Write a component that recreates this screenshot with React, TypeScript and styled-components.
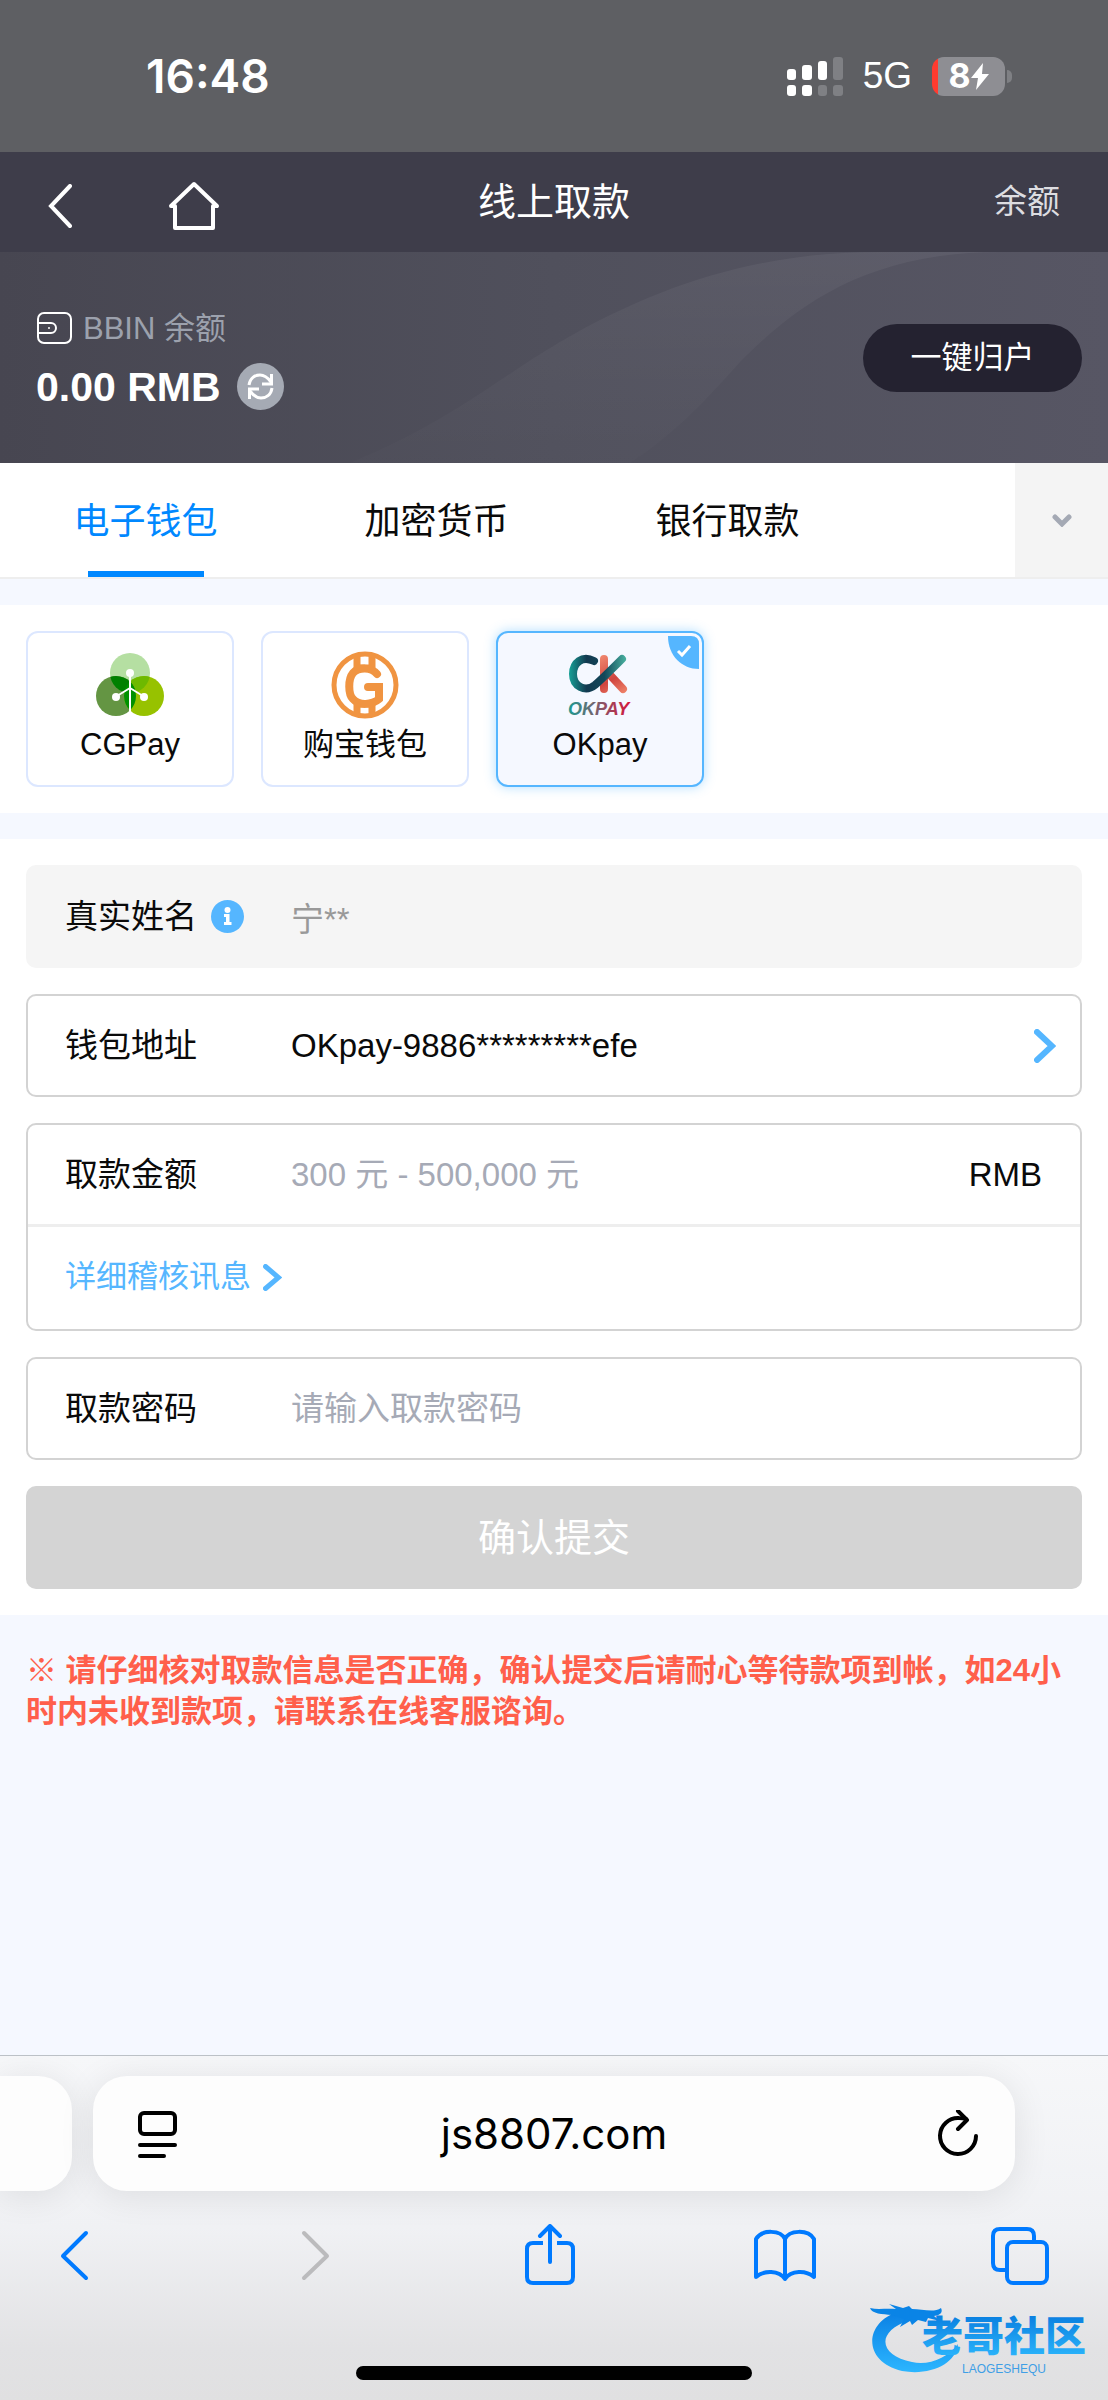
import React, { useState } from "react";
import styled, { createGlobalStyle, css } from "styled-components";

const sans = `"Liberation Sans", "Noto Sans CJK SC", sans-serif`;
const system = `Inter, "Noto Sans CJK SC", sans-serif`;

const GlobalStyle = createGlobalStyle`
  *, *::before, *::after { box-sizing: border-box; }
  body { margin: 0; background: #f5f8ff; font-family: ${sans}; color: #0a0a0a; }
  button, input { font: inherit; color: inherit; margin: 0; padding: 0; border: 0; background: none; }
  button { cursor: pointer; }
  svg { display: block; flex: none; }
`;

const Screen = styled.div`
  display: flex;
  flex-direction: column;
  min-height: 100vh;
  background: #f5f8ff;
`;

/* ---------- status bar ---------- */

const StatusBar = styled.div`
  display: flex;
  align-items: center;
  justify-content: space-between;
  height: 152px;
  padding: 0 96px 0 146px;
  background: #5e5f63;
  color: #fff;
  font-family: ${system};
`;

const Clock = styled.time`
  font-size: 46px;
  line-height: 56px;
  font-weight: 600;
`;

const StatusIcons = styled.div`
  display: flex;
  align-items: center;
  gap: 20px;
`;

const Network = styled.span`
  font-family: ${sans};
  font-size: 37px;
  line-height: 44px;
`;

const Battery = styled.div`
  display: flex;
  align-items: center;
  gap: 2px;
`;

const BatteryBody = styled.div`
  display: flex;
  align-items: center;
  justify-content: center;
  width: 73px;
  height: 39px;
  border-radius: 12px;
  background: linear-gradient(90deg, #ff3b30 6px, #8e8e93 6px);
  font-size: 34px;
  line-height: 38px;
  font-weight: 700;
`;

const BatteryTip = styled.i`
  width: 5px;
  height: 13px;
  border-radius: 0 5px 5px 0;
  background: #7f8084;
`;

/* ---------- page header ---------- */

const NavBar = styled.header`
  display: grid;
  grid-template-columns: 1fr auto 1fr;
  align-items: center;
  height: 100px;
  padding: 0 48px;
  background: #3e3d4a;
  color: #fff;
`;

const NavLeft = styled.div`
  display: flex;
  align-items: center;
  gap: 96px;
  padding-top: 7px;
`;

const Title = styled.h1`
  margin: 0;
  font-size: 38px;
  line-height: 48px;
  font-weight: 400;
`;

const NavLink = styled.a`
  justify-self: end;
  color: #dddde1;
  font-size: 33px;
  line-height: 44px;
  text-decoration: none;
`;

const IconButton = styled.button`
  display: flex;
  align-items: center;
  justify-content: center;
`;

const BalancePanel = styled.section`
  position: relative;
  display: flex;
  align-items: center;
  justify-content: space-between;
  height: 211px;
  padding: 0 26px 0 36px;
  background: linear-gradient(90deg, #474651, #50505c 50%, #575664);
`;

const PanelArt = styled.svg`
  position: absolute;
  inset: 0;
  width: 100%;
  height: 100%;
`;

const BalanceInfo = styled.div`
  position: relative;
  display: flex;
  flex-direction: column;
  gap: 10px;
`;

const BalanceLabel = styled.div`
  display: flex;
  align-items: center;
  gap: 10px;
  color: #9ca1ad;
  font-size: 31px;
  line-height: 48px;
`;

const BalanceAmount = styled.div`
  display: flex;
  align-items: center;
  gap: 16px;
  color: #fff;
  font-size: 41px;
  line-height: 48px;
  font-weight: 700;
`;

const RefreshButton = styled(IconButton)`
  width: 47px;
  height: 47px;
  border-radius: 50%;
  background: #a5aab4;
`;

const CollectButton = styled.button`
  position: relative;
  width: 219px;
  height: 68px;
  border-radius: 34px;
  background: #242230;
  color: #fff;
  font-size: 31px;
  line-height: 44px;
`;

/* ---------- tabs ---------- */

const TabBar = styled.nav`
  display: flex;
  height: 116px;
  border-bottom: 2px solid #eeeeee;
  background: #fff;
`;

const TabList = styled.div`
  display: flex;
  flex: 1;
  overflow: hidden;
`;

const Tab = styled.button<{ $active: boolean }>`
  display: flex;
  flex-direction: column;
  align-items: center;
  justify-content: flex-end;
  flex: 0 0 291px;
  font-size: 36px;
  line-height: 48px;
  color: ${(p) => (p.$active ? "#0088ff" : "#0a0a0a")};
  &::after {
    content: "";
    width: 116px;
    height: 6px;
    margin-top: 25px;
    background: ${(p) => (p.$active ? "#0088ff" : "transparent")};
  }
`;

const MoreTabs = styled(IconButton)`
  flex: 0 0 93px;
  background: #f4f4f4;
`;

/* ---------- wallets ---------- */

const Section = styled.section`
  margin-top: 26px;
  padding: 26px;
  background: #fff;
`;

const WalletRow = styled.div`
  display: flex;
  gap: 27px;
`;

const WalletCard = styled.label<{ $selected: boolean }>`
  position: relative;
  display: flex;
  flex-direction: column;
  align-items: center;
  gap: 4px;
  width: 208px;
  height: 156px;
  padding-top: 18px;
  border: 2px solid #dce7ff;
  border-radius: 12px;
  font-size: 31px;
  line-height: 44px;
  cursor: pointer;
  ${(p) =>
    p.$selected &&
    css`
      border-color: #55b6ff;
      background: #f5f8ff;
      box-shadow: 0 0 12px rgba(85, 182, 255, 0.45);
    `}
`;

const HiddenRadio = styled.input`
  position: absolute;
  opacity: 0;
  pointer-events: none;
`;

const SelectedMark = styled.svg`
  position: absolute;
  top: 3px;
  right: 3px;
`;

/* ---------- form ---------- */

const Form = styled.form`
  display: flex;
  flex-direction: column;
  gap: 26px;
`;

const FieldBox = styled.div<{ $muted?: boolean }>`
  border: 2px solid ${(p) => (p.$muted ? "#f5f5f5" : "#d3d3d3")};
  border-radius: 10px;
  background: ${(p) => (p.$muted ? "#f5f5f5" : "#fff")};
  font-size: 33px;
  line-height: 44px;
`;

const FieldRow = styled.div`
  display: flex;
  align-items: center;
  height: 99px;
  padding: 0 38px 0 37px;
`;

const PickerRow = styled.button`
  display: flex;
  align-items: center;
  width: 100%;
  height: 99px;
  padding: 0 24px 0 37px;
  text-align: left;
`;

const FieldLabel = styled.label`
  display: flex;
  align-items: center;
  gap: 14px;
  flex: 0 0 226px;
`;

const FieldInput = styled.input`
  flex: 1;
  min-width: 0;
  height: 60px;
  outline: none;
  &::placeholder { color: #a6aab6; opacity: 1; }
  &:disabled { color: #999; }
`;

const FieldValue = styled.span`
  flex: 1;
`;

const DetailRow = styled.div`
  display: flex;
  align-items: center;
  height: 105px;
  padding: 0 37px 2px;
  border-top: 3px solid #eeeeee;
`;

const DetailLink = styled.a`
  display: flex;
  align-items: center;
  gap: 12px;
  color: #55b6ff;
  font-size: 31px;
  text-decoration: none;
`;

const SubmitButton = styled.button`
  height: 103px;
  border-radius: 10px;
  background: #d4d4d4;
  color: #fff;
  font-size: 38px;
  line-height: 48px;
`;

const Notice = styled.p`
  margin: 0;
  padding: 35px 26px;
  color: #ff5f4b;
  font-size: 31px;
  line-height: 41px;
  font-weight: 700;
`;

/* ---------- browser controls ---------- */

const BrowserBar = styled.footer`
  position: relative;
  margin-top: auto;
  overflow: hidden;
  border-top: 1px solid #bcc1c7;
  background: linear-gradient(#f6f7f9, #f0f1f4 50%, #e2e2e4 85%, #e0e0e1);
`;

const AddressRow = styled.div`
  display: flex;
  gap: 21px;
  padding: 20px 93px 0 0;
`;

const NeighbourTab = styled.div`
  flex: 0 0 72px;
  border-radius: 0 34px 34px 0;
  background: #fdfdfd;
  box-shadow: 0 4px 36px rgba(0, 0, 0, 0.09);
`;

const AddressPill = styled.div`
  display: flex;
  align-items: center;
  flex: 1;
  height: 115px;
  padding: 0 36px 0 44px;
  border-radius: 34px;
  background: #fdfdfd;
  box-shadow: 0 4px 36px rgba(0, 0, 0, 0.09);
`;

const AddressInput = styled.input`
  flex: 1;
  min-width: 0;
  height: 60px;
  font-family: ${system};
  font-size: 42px;
  text-align: center;
  color: #000;
  outline: none;
`;

const Toolbar = styled.div`
  display: flex;
  justify-content: space-between;
  padding: 33px 57px 0 48px;
`;

const HomeIndicator = styled.div`
  width: 396px;
  height: 14px;
  margin: 80px auto 20px;
  border-radius: 7px;
  background: #000;
`;

const Watermark = styled.svg`
  position: absolute;
  right: 12px;
  bottom: 20px;
`;

/* ---------- drawings ---------- */

const Signal = () => (
  <svg width="56" height="39" viewBox="0 0 56 39" fill="#fff">
    <rect x="0" y="12" width="9" height="11" rx="3" />
    <rect x="15" y="8" width="10" height="15" rx="3" />
    <rect x="31" y="4" width="9" height="19" rx="3" />
    <rect x="46" y="0" width="10" height="23" rx="3" fill="#7f8084" />
    <rect x="0" y="28" width="9" height="11" rx="3" />
    <rect x="15" y="28" width="10" height="11" rx="3" />
    <rect x="31" y="28" width="9" height="11" rx="3" fill="#7f8084" />
    <rect x="46" y="28" width="10" height="11" rx="3" fill="#7f8084" />
  </svg>
);

const Bolt = () => (
  <svg width="18" height="27" viewBox="0 0 18 27" fill="#fff">
    <path d="M12 0 L0 15 H7 L5 27 L18 11 H11 Z" />
  </svg>
);

const Wallet = () => (
  <svg width="37" height="33" viewBox="0 0 37 33" fill="none" stroke="#fff" strokeWidth="2">
    <rect x="2" y="1" width="33" height="30" rx="6" />
    <path d="M2 11 H15 A5 5 0 0 1 15 21 H2" />
    <circle cx="13" cy="16" r="1" fill="#fff" stroke="none" />
  </svg>
);

const Refresh = () => (
  <svg width="27" height="27" viewBox="0 0 27 27" fill="none" stroke="#fff" strokeWidth="3">
    <path d="M2 12 C3 5 8 2 13 2 C18 2 21 5 24 9" />
    <path d="M24.500 1 V11 H15" />
    <path d="M25 15 C24 22 19 25 14 25 C9 25 6 22 3 18" />
    <path d="M2.500 26 V16 H12" />
  </svg>
);

const CGPayLogo = () => (
  <svg width="68" height="68" viewBox="0 0 68 68">
    <defs>
      <clipPath id="cgTop"><circle cx="34" cy="22" r="20" /></clipPath>
      <clipPath id="cgLeft"><circle cx="20" cy="45" r="20" /></clipPath>
    </defs>
    <circle cx="34" cy="22" r="20" fill="#b5dfa2" />
    <circle cx="20" cy="45" r="20" fill="#649543" />
    <circle cx="48" cy="45" r="20" fill="#97c200" />
    <circle cx="48" cy="45" r="20" fill="#6eb900" clipPath="url(#cgTop)" />
    <circle cx="20" cy="45" r="20" fill="#008000" clipPath="url(#cgTop)" />
    <circle cx="48" cy="45" r="20" fill="#009100" clipPath="url(#cgLeft)" />
    <path d="M34 20 V65 M34 37 L21 45 M34 37 L47 45" stroke="#fff" strokeWidth="2" fill="none" />
    <g fill="#fff">
      <circle cx="34" cy="22" r="4" />
      <circle cx="20" cy="46" r="4" />
      <circle cx="48" cy="46" r="4" />
    </g>
  </svg>
);

const GoubaoLogo = () => (
  <svg width="68" height="68" viewBox="0 0 68 68" fill="none" stroke="#f09441">
    <circle cx="34" cy="34" r="31" strokeWidth="5" />
    <path d="M26 4 V18 M41 4 V18 M26 51 V64 M41 51 V64" strokeWidth="7" />
    <path d="M26 16 H41 M26 54 H41" strokeWidth="5" />
    <path
      d="M46 23 C40 16 28 16 22 22 C17 28 17 43 22 48 C28 55 41 54 48 48 V36 H37"
      strokeWidth="8"
      strokeLinecap="round"
    />
  </svg>
);

const OKpayLogo = () => (
  <svg width="68" height="68" viewBox="0 0 68 68" fill="none">
    <defs>
      <linearGradient id="okTeal" x1="3" y1="0" x2="62" y2="0" gradientUnits="userSpaceOnUse">
        <stop offset="0" stopColor="#17a096" />
        <stop offset="0.3" stopColor="#12394f" />
        <stop offset="0.6" stopColor="#12485a" />
        <stop offset="1" stopColor="#4dbaa6" />
      </linearGradient>
      <linearGradient id="okRed" x1="36" y1="4" x2="58" y2="42" gradientUnits="userSpaceOnUse">
        <stop offset="0" stopColor="#f0876e" />
        <stop offset="0.6" stopColor="#d0453f" />
        <stop offset="1" stopColor="#ee8168" />
      </linearGradient>
      <linearGradient id="okWord" x1="2" y1="0" x2="66" y2="0" gradientUnits="userSpaceOnUse">
        <stop offset="0" stopColor="#1c9a90" />
        <stop offset="0.5" stopColor="#855868" />
        <stop offset="1" stopColor="#dc1238" />
      </linearGradient>
    </defs>
    <path d="M38 8 V38 M44 24 L57 38" stroke="url(#okRed)" strokeWidth="8" strokeLinecap="round" />
    <path
      d="M28 10 C16 4 7 12 7 23 C7 35 19 42 29 34 C36 28 48 16 56 8"
      stroke="url(#okTeal)"
      strokeWidth="8"
      strokeLinecap="round"
    />
    <text x="2" y="64" fill="url(#okWord)" fontFamily="Liberation Sans, sans-serif" fontSize="18" fontWeight="700" fontStyle="italic">
      OKPAY
    </text>
  </svg>
);

const InfoIcon = () => (
  <svg width="33" height="33" viewBox="0 0 33 33">
    <circle cx="16.500" cy="16.500" r="16.500" fill="#55b6ff" />
    <circle cx="16.500" cy="10" r="3" fill="#fff" />
    <path d="M13 14 H18.500 V22 H20.500 V25 H13 V22 H15 V17 H13 Z" fill="#fff" />
  </svg>
);

const Chevron = ({ width, height, thickness, color }: { width: number; height: number; thickness: number; color: string }) => {
  const pad = thickness / 2;
  return (
    <svg width={width} height={height} fill="none" stroke={color} strokeWidth={thickness} strokeLinecap="round">
      <path d={`M${pad} ${pad} L${width - pad - 1} ${height / 2} L${pad} ${height - pad}`} />
    </svg>
  );
};

const Logo = () => (
  <Watermark width="230" height="80" viewBox="0 0 230 80" role="img" aria-label="老哥社区">
    <defs>
      <linearGradient id="wmText" x1="0" y1="0" x2="0" y2="1">
        <stop offset="0.2" stopColor="#0a7fe0" />
        <stop offset="0.9" stopColor="#2bb4fb" />
      </linearGradient>
      <linearGradient id="wmDragon" x1="0" y1="0" x2="0" y2="1">
        <stop offset="0" stopColor="#0a80e4" />
        <stop offset="1" stopColor="#2cb6ff" />
      </linearGradient>
    </defs>
    <path
      d="M32 12 C-2 22 -4 62 36 71 C64 76 90 64 92 44 C82 58 62 66 46 62 C14 56 8 32 44 20 Z"
      fill="url(#wmDragon)"
    />
    <path
      d="M4 8 C12 10 20 8 30 9 L23 4 L37 8 L43 6 L46 9 C56 9 68 13 75 8 C77 12 75 15 68 16 L74 21 L62 18 L60 22 L52 20 L46 25 L44 21 L34 27 L38 19 L26 15 C16 14 6 14 4 8 Z"
      fill="#0a84e6"
    />
    <text x="56" y="51" fill="url(#wmText)" fontFamily="Noto Sans CJK SC, sans-serif" fontSize="41" fontWeight="900">
      老哥社区
    </text>
    <text x="96" y="73" fill="#3f9fe6" fontFamily="Liberation Sans, sans-serif" fontSize="12">
      LAOGESHEQU
    </text>
  </Watermark>
);

/* ---------- page ---------- */

const tabs = ["电子钱包", "加密货币", "银行取款"];

const wallets = [
  { id: "cgpay", name: "CGPay", logo: <CGPayLogo /> },
  { id: "goubao", name: "购宝钱包", logo: <GoubaoLogo /> },
  { id: "okpay", name: "OKpay", logo: <OKpayLogo /> },
];

export default function App() {
  const [tab, setTab] = useState(0);
  const [wallet, setWallet] = useState("okpay");

  return (
    <Screen>
      <GlobalStyle />
      <StatusBar>
        <Clock>16:48</Clock>
        <StatusIcons>
          <Signal />
          <Network>5G</Network>
          <Battery>
            <BatteryBody>8<Bolt /></BatteryBody>
            <BatteryTip />
          </Battery>
        </StatusIcons>
      </StatusBar>

      <NavBar>
        <NavLeft>
          <IconButton aria-label="返回">
            <svg width="24" height="44" viewBox="0 0 24 44" fill="none" stroke="#fff" strokeWidth="4" strokeLinecap="round">
              <path d="M22 2 L3 22 L22 42" />
            </svg>
          </IconButton>
          <IconButton aria-label="首页">
            <svg width="52" height="50" viewBox="0 0 52 50" fill="none" stroke="#fff" strokeWidth="4" strokeLinejoin="round">
              <path d="M26 3 L49 25 H45 V47 H7 V25 H3 Z" />
            </svg>
          </IconButton>
        </NavLeft>
        <Title>线上取款</Title>
        <NavLink href="#balance">余额</NavLink>
      </NavBar>

      <BalancePanel>
        <PanelArt viewBox="0 0 1108 211" preserveAspectRatio="none" aria-hidden="true">
          <defs>
            <linearGradient id="band" x1="0" y1="0" x2="0" y2="1">
              <stop offset="0" stopColor="#fff" stopOpacity="0.05" />
              <stop offset="1" stopColor="#fff" stopOpacity="0.01" />
            </linearGradient>
          </defs>
          <path d="M350 211 C450 170 500 125 560 90 C660 32 760 0 880 0 H1000 C860 0 790 60 740 110 C700 155 670 185 630 211 Z" fill="url(#band)" />
        </PanelArt>
        <BalanceInfo>
          <BalanceLabel><Wallet />BBIN 余额</BalanceLabel>
          <BalanceAmount>
            0.00 RMB
            <RefreshButton aria-label="刷新"><Refresh /></RefreshButton>
          </BalanceAmount>
        </BalanceInfo>
        <CollectButton>一键归户</CollectButton>
      </BalancePanel>

      <TabBar>
        <TabList>
          {tabs.map((name, i) => (
            <Tab key={name} $active={i === tab} onClick={() => setTab(i)}>{name}</Tab>
          ))}
        </TabList>
        <MoreTabs aria-label="更多">
          <svg width="20" height="13" viewBox="0 0 20 13" fill="none" stroke="#a4a9b4" strokeWidth="5" strokeLinecap="round">
            <path d="M3 3 L10 10 L17 3" />
          </svg>
        </MoreTabs>
      </TabBar>

      <Section>
        <WalletRow>
          {wallets.map((w) => (
            <WalletCard key={w.id} $selected={w.id === wallet}>
              <HiddenRadio type="radio" name="wallet" checked={w.id === wallet} onChange={() => setWallet(w.id)} />
              {w.logo}
              {w.name}
              {w.id === wallet && (
                <SelectedMark width="31" height="33" viewBox="0 0 31 33">
                  <path d="M0 0 H23 Q31 0 31 8 V33 C14 33 0 20 0 0 Z" fill="#55b6ff" />
                  <path d="M10 15 L14 19 L22 10" fill="none" stroke="#fff" strokeWidth="3" />
                </SelectedMark>
              )}
            </WalletCard>
          ))}
        </WalletRow>
      </Section>

      <Section>
        <Form onSubmit={(e: React.FormEvent) => e.preventDefault()}>
          <FieldBox $muted>
            <FieldRow>
              <FieldLabel htmlFor="name">真实姓名<InfoIcon /></FieldLabel>
              <FieldInput id="name" defaultValue="宁**" disabled />
            </FieldRow>
          </FieldBox>
          <FieldBox>
            <PickerRow type="button">
              <FieldLabel as="span">钱包地址</FieldLabel>
              <FieldValue>OKpay-9886*********efe</FieldValue>
              <Chevron width={22} height={34} thickness={6} color="#55b6ff" />
            </PickerRow>
          </FieldBox>
          <FieldBox>
            <FieldRow>
              <FieldLabel htmlFor="amount">取款金额</FieldLabel>
              <FieldInput id="amount" inputMode="decimal" placeholder="300 元 - 500,000 元" />
              <span>RMB</span>
            </FieldRow>
            <DetailRow>
              <DetailLink href="#audit">
                详细稽核讯息
                <Chevron width={19} height={27} thickness={5} color="#55b6ff" />
              </DetailLink>
            </DetailRow>
          </FieldBox>
          <FieldBox>
            <FieldRow>
              <FieldLabel htmlFor="password">取款密码</FieldLabel>
              <FieldInput id="password" type="password" placeholder="请输入取款密码" />
            </FieldRow>
          </FieldBox>
          <SubmitButton type="submit">确认提交</SubmitButton>
        </Form>
      </Section>

      <Notice>
        ※ 请仔细核对取款信息是否正确，确认提交后请耐心等待款项到帐，如24小时内未收到款项，请联系在线客服谘询。
      </Notice>

      <BrowserBar>
        <AddressRow>
          <NeighbourTab />
          <AddressPill>
            <IconButton aria-label="页面菜单">
              <svg width="40" height="48" viewBox="0 0 40 48" fill="none" stroke="#000" strokeWidth="4" strokeLinecap="round">
                <rect x="3" y="3" width="35" height="21" rx="4" />
                <path d="M3 35 H38 M3 46 H27" />
              </svg>
            </IconButton>
            <AddressInput aria-label="网址" defaultValue="js8807.com" />
            <IconButton aria-label="重新载入">
              <svg width="48" height="48" viewBox="0 0 48 48" fill="none" stroke="#000" strokeWidth="4" strokeLinecap="round" strokeLinejoin="round">
                <path d="M45 26 A18 18 0 1 1 28 8 Q32 8 35 9" />
                <path d="M27 1 L36 10 L27 19" />
              </svg>
            </IconButton>
          </AddressPill>
        </AddressRow>
        <Toolbar>
          <IconButton aria-label="后退">
            <svg width="62" height="62" viewBox="0 0 62 62" fill="none" stroke="#007aff" strokeWidth="4" strokeLinecap="round" strokeLinejoin="round">
              <path d="M38 9 L15 32 L38 54" />
            </svg>
          </IconButton>
          <IconButton aria-label="前进">
            <svg width="62" height="62" viewBox="0 0 62 62" fill="none" stroke="#bbbbbd" strokeWidth="4" strokeLinecap="round" strokeLinejoin="round">
              <path d="M21 9 L44 32 L21 54" />
            </svg>
          </IconButton>
          <IconButton aria-label="分享">
            <svg width="62" height="62" viewBox="0 0 62 62" fill="none" stroke="#007aff" strokeWidth="4" strokeLinecap="round" strokeLinejoin="round">
              <path d="M24 19 H14 Q8 19 8 25 V53 Q8 59 14 59 H48 Q54 59 54 53 V25 Q54 19 48 19 H38" strokeLinecap="butt" />
              <path d="M31 38 V3 M21 12 L31 2 L41 12" />
            </svg>
          </IconButton>
          <IconButton aria-label="书签">
            <svg width="62" height="62" viewBox="0 0 62 62" fill="none" stroke="#007aff" strokeWidth="4" strokeLinecap="round" strokeLinejoin="round">
              <path d="M31 15 C27 6 8 5 2 15 V53 C10 46 25 46 31 55 C37 46 52 46 60 53 V15 C54 5 35 6 31 15 V55" />
            </svg>
          </IconButton>
          <IconButton aria-label="标签页">
            <svg width="62" height="62" viewBox="0 0 62 62" fill="none" stroke="#007aff" strokeWidth="4" strokeLinejoin="round">
              <path d="M17 46 H11 Q4 46 4 39 V12 Q4 5 11 5 H38 Q45 5 45 12 V17" />
              <rect x="18" y="18" width="40" height="41" rx="6" />
            </svg>
          </IconButton>
        </Toolbar>
        <HomeIndicator />
        <Logo />
      </BrowserBar>
    </Screen>
  );
}
